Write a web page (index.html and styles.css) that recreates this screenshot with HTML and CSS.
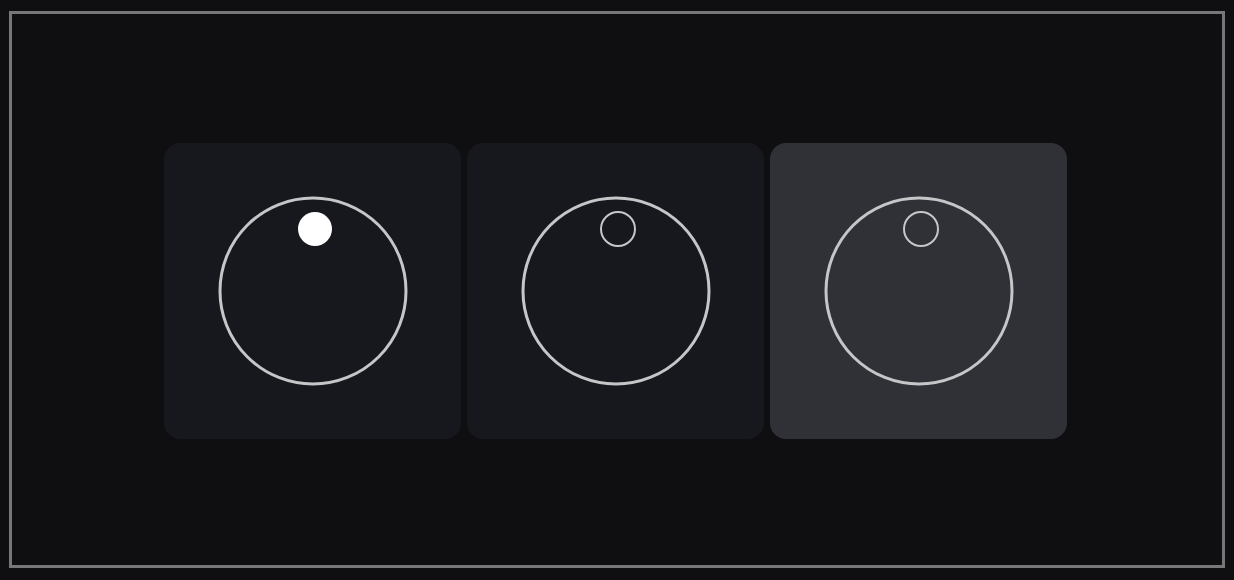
FILE: index.html
```html
<!DOCTYPE html>
<html lang="en">
<head>
  <meta charset="UTF-8">
  <meta name="viewport" content="width=device-width, initial-scale=1.0">
  <link rel="stylesheet" href="styles.css">
  <title>Knobs</title>
</head>
<body>
  <div class="frame">
    <div class="knobs">
      <div class="card">
        <svg class="knob" width="190" height="190" viewBox="0 0 190 190">
          <circle class="knob-ring" cx="95" cy="95" r="93" />
          <circle class="knob-dot active" cx="97" cy="33" r="17" />
        </svg>
      </div>
      <div class="card">
        <svg class="knob" width="190" height="190" viewBox="0 0 190 190">
          <circle class="knob-ring" cx="95" cy="95" r="93" />
          <circle class="knob-dot" cx="97" cy="33" r="17" />
        </svg>
      </div>
      <div class="card hover">
        <svg class="knob" width="190" height="190" viewBox="0 0 190 190">
          <circle class="knob-ring" cx="95" cy="95" r="93" />
          <circle class="knob-dot" cx="97" cy="33" r="17" />
        </svg>
      </div>
    </div>
  </div>
</body>
</html>
```

FILE: styles.css
```css
html, body {
  margin: 0;
  height: 100%;
}

body {
  background-color: #0f0f12;
  font-family: 'Liberation Sans', Arial, sans-serif;
  padding: 11px 9px 12px 9px;
  box-sizing: border-box;
}

.frame {
  height: 100%;
  box-sizing: border-box;
  border: 3px solid #77777b;
  display: flex;
  align-items: center;
  justify-content: center;
}

.knobs {
  display: flex;
  gap: 6px;
  margin-right: 3px;
  margin-top: 3px;
}

.card {
  width: 297px;
  height: 296px;
  border-radius: 16px;
  background-color: #17181e;
  display: flex;
  align-items: center;
  justify-content: center;
}

.card.hover {
  background-color: #303037;
}

.knob {
  display: block;
}

.knob-ring {
  fill: none;
  stroke: #c6c6c8;
  stroke-width: 3;
}

.knob-dot {
  fill: none;
  stroke: #c6c6c8;
  stroke-width: 2;
}

.knob-dot.active {
  fill: #ffffff;
  stroke: none;
}
```
